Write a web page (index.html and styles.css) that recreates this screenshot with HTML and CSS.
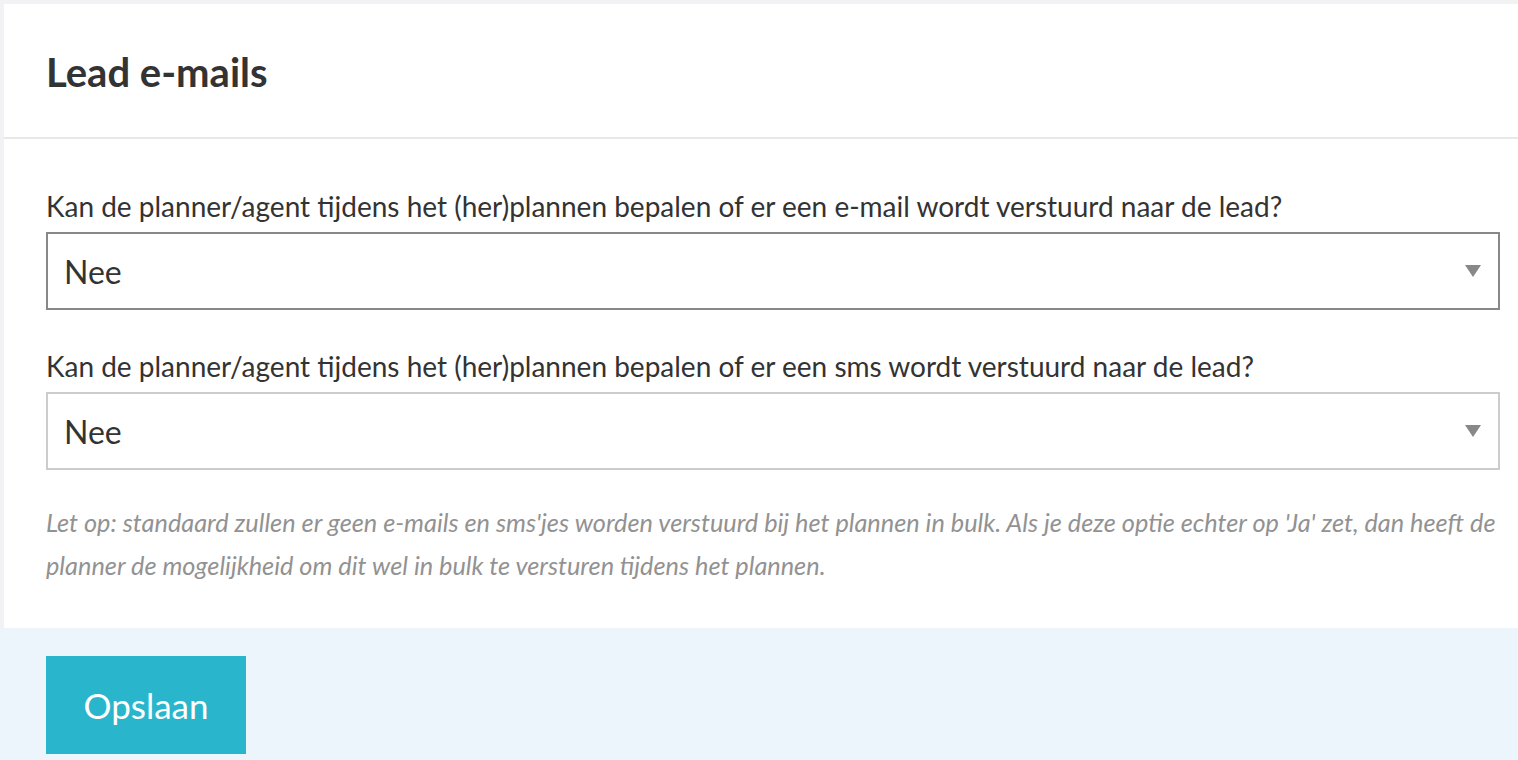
FILE: index.html
```html
<!DOCTYPE html>
<html lang="nl">
<head>
    <meta charset="UTF-8">
    <meta name="viewport" content="width=device-width, initial-scale=1.0">
    <title>Lead e-mails</title>
    <link rel="stylesheet" href="styles.css">
</head>
<body>
    <div class="panel">
        <div class="panel-header">
            <h2 class="panel-title">Lead e-mails</h2>
        </div>
        <div class="panel-body">
            <div class="field">
                <label class="field-label" for="mail-choice">Kan de planner/agent tijdens het (her)plannen bepalen of er een e-mail wordt verstuurd naar de lead?</label>
                <div class="select-wrap">
                    <select id="mail-choice" class="select active">
                        <option>Nee</option>
                        <option>Ja</option>
                    </select>
                    <svg class="select-arrow" width="16" height="12" viewBox="0 0 16 12"><polygon points="0,0 16,0 8,12" fill="#888"/></svg>
                </div>
            </div>
            <div class="field">
                <label class="field-label" for="sms-choice">Kan de planner/agent tijdens het (her)plannen bepalen of er een sms wordt verstuurd naar de lead?</label>
                <div class="select-wrap">
                    <select id="sms-choice" class="select">
                        <option>Nee</option>
                        <option>Ja</option>
                    </select>
                    <svg class="select-arrow" width="16" height="12" viewBox="0 0 16 12"><polygon points="0,0 16,0 8,12" fill="#888"/></svg>
                </div>
            </div>
            <p class="note">Let op: standaard zullen er geen e-mails en sms'jes worden verstuurd bij het plannen in bulk. Als je deze optie echter op 'Ja' zet, dan heeft de planner de mogelijkheid om dit wel in bulk te versturen tijdens het plannen.</p>
        </div>
    </div>
    <div class="panel-footer">
        <button class="btn-save" type="button">Opslaan</button>
    </div>
</body>
</html>
```

FILE: styles.css
```css
html, body {
    margin: 0;
    padding: 0;
}

body {
    background-color: #f2f2f5;
    font-family: Lato, "Open Sans", sans-serif;
    color: #333;
    padding-top: 4px;
    overflow: hidden;
}

.panel {
    background-color: #fff;
    margin-left: 4px;
}

.panel-header {
    padding: 44px 42px 41px;
    border-bottom: 2px solid #e8e8e8;
}

.panel-title {
    margin: 0;
    font-size: 40px;
    line-height: 48px;
    font-weight: 700;
    color: #333;
}

.panel-body {
    padding: 47px 18px 41px 42px;
}

.field {
    margin-bottom: 36px;
}

.field:last-of-type {
    margin-bottom: 31px;
}

.field-label {
    display: block;
    font-size: 28px;
    line-height: 40px;
    margin-bottom: 6px;
    color: #333;
}

.select-wrap {
    position: relative;
}

.select {
    display: block;
    width: 100%;
    height: 78px;
    padding: 0 50px 0 16px;
    font-family: Lato, "Open Sans", sans-serif;
    font-size: 32px;
    color: #333;
    background-color: #fff;
    border: 2px solid #ccc;
    border-radius: 0;
    -webkit-appearance: none;
    appearance: none;
    box-sizing: border-box;
    outline: none;
}

.select.active {
    border-color: #888;
}

.select-arrow {
    position: absolute;
    right: 19px;
    top: 33px;
    pointer-events: none;
}

.note {
    margin: 0;
    font-size: 25.3px;
    line-height: 43px;
    font-style: italic;
    color: #929292;
}

.panel-footer {
    background-color: #edf5fc;
    padding: 28px 46px 20px;
}

.btn-save {
    width: 200px;
    height: 98px;
    border: none;
    border-radius: 0;
    background-color: #29b6cc;
    color: #fff;
    font-family: Lato, "Open Sans", sans-serif;
    font-size: 35px;
    cursor: pointer;
}
```
